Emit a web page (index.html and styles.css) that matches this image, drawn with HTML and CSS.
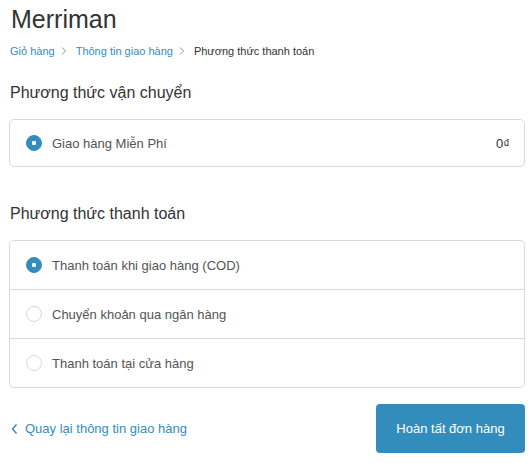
FILE: index.html
```html
<!DOCTYPE html>
<html lang="vi">
<head>
<meta charset="utf-8">
<link rel="stylesheet" href="styles.css">
</head>
<body>
<div class="page">
  <h1 class="logo">Merriman</h1>
  <nav class="crumbs">
    <a class="crumb-link">Giỏ hàng</a>
    <svg class="crumb-sep" width="6" height="10" viewBox="0 0 6 10"><path d="M1 1.5 L4.5 5 L1 8.5" fill="none" stroke="#919191" stroke-width="1"/></svg>
    <a class="crumb-link">Thông tin giao hàng</a>
    <svg class="crumb-sep" width="6" height="10" viewBox="0 0 6 10"><path d="M1 1.5 L4.5 5 L1 8.5" fill="none" stroke="#919191" stroke-width="1"/></svg>
    <span class="crumb-current">Phương thức thanh toán</span>
  </nav>

  <h2 class="section-title first">Phương thức vận chuyển</h2>
  <div class="box">
    <div class="row single">
      <span class="radio checked"></span>
      <span class="label">Giao hàng Miễn Phí</span>
      <span class="price">0₫</span>
    </div>
  </div>

  <h2 class="section-title second">Phương thức thanh toán</h2>
  <div class="box">
    <div class="row">
      <span class="radio checked"></span>
      <span class="label">Thanh toán khi giao hàng (COD)</span>
    </div>
    <div class="row">
      <span class="radio"></span>
      <span class="label">Chuyển khoản qua ngân hàng</span>
    </div>
    <div class="row">
      <span class="radio"></span>
      <span class="label">Thanh toán tại cửa hàng</span>
    </div>
  </div>

  <div class="footer">
    <a class="back">
      <svg class="back-icon" width="10" height="12" viewBox="0 0 10 12"><path d="M6.5 1.5 L2.5 6 L6.5 10.5" fill="none" stroke="#338dbc" stroke-width="1.5"/></svg>
      <span>Quay lại thông tin giao hàng</span>
    </a>
    <button class="btn">Hoàn tất đơn hàng</button>
  </div>
</div>
</body>
</html>
```

FILE: styles.css
```css
* { box-sizing: border-box; }
html, body { margin: 0; padding: 0; background: #fff; }
body {
  font-family: "Liberation Sans", Arial, sans-serif;
  color: #545454;
  font-size: 13px;
}
.page {
  margin-left: 9px;
  width: 516px;
  padding-top: 4px;
}
.logo {
  margin: 0;
  font-size: 25px;
  line-height: 31px;
  font-weight: normal;
  color: #333333;
  padding-left: 2px;
}
.crumbs {
  margin-top: 7px;
  display: flex;
  align-items: center;
  font-size: 11px;
  line-height: 18px;
  height: 18px;
  padding-left: 1px;
}
.crumb-link { color: #338dbc; text-decoration: none; }
.crumb-current { color: #333333; }
.crumb-sep { margin: 0 9px 0 6px; }
.section-title {
  margin: 0;
  font-size: 16px;
  line-height: 22px;
  font-weight: normal;
  color: #333333;
  padding-left: 1px;
}
.section-title.first { margin-top: 22px; margin-bottom: 15px; }
.section-title.second { margin-top: 36px; margin-bottom: 15px; }
.box {
  border: 1px solid #d9d9d9;
  border-radius: 5px;
}
.row {
  display: flex;
  align-items: center;
  height: 48px;
  padding: 0 14px 0 16px;
  border-top: 1px solid #d9d9d9;
}
.row:first-child { border-top: none; height: 48px; }
.row.single { height: 46px; }
.box .row + .row { height: 49px; }
.radio {
  width: 16px;
  height: 16px;
  border-radius: 50%;
  border: 1px solid #d9d9d9;
  flex: none;
  display: flex;
  align-items: center;
  justify-content: center;
}
.radio.checked {
  background: #338dbc;
  border-color: #338dbc;
}
.radio.checked::after {
  content: "";
  width: 4px;
  height: 4px;
  border-radius: 1px;
  background: #fff;
}
.label { margin-left: 10px; color: #545454; }
.price { margin-left: auto; color: #333333; }
.footer {
  margin-top: 16px;
  display: flex;
  align-items: center;
  justify-content: space-between;
}
.back {
  display: flex;
  align-items: center;
  color: #338dbc;
  text-decoration: none;
  font-size: 13px;
}
.back-icon { margin-right: 5px; margin-left: 1px; }
.btn {
  width: 149px;
  height: 49px;
  background: #338dbc;
  color: #fff;
  border: none;
  border-radius: 4px;
  font-family: "Liberation Sans", Arial, sans-serif;
  font-size: 13px;
  padding: 0;
}
```
